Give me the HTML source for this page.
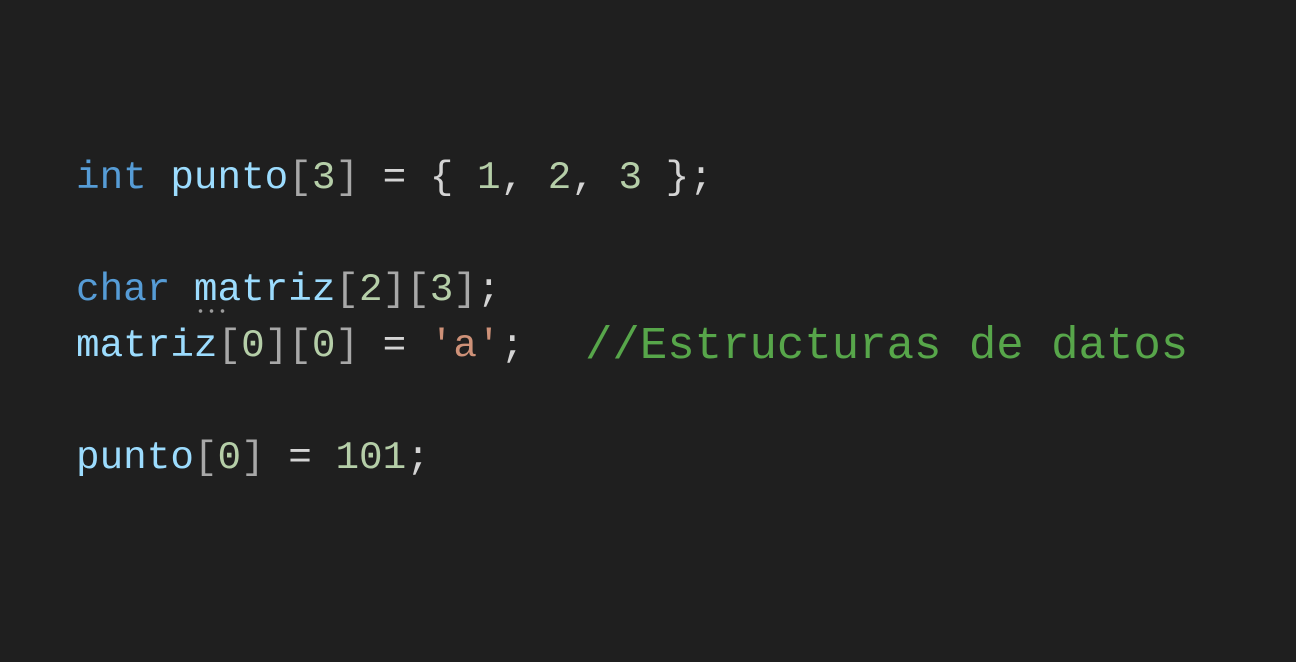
<!DOCTYPE html>
<html><head><meta charset="utf-8"><style>
html,body{margin:0;padding:0;background:#1f1f1f;width:1296px;height:662px;overflow:hidden}
.l{position:absolute;left:76px;font-family:"Liberation Mono",monospace;font-size:39.3px;line-height:56px;white-space:pre;color:#d4d4d4}
.k{color:#569cd6}.v{color:#9cdcfe}.n{color:#b5cea8}.b{color:#a8a8a8}.s{color:#ce9178}
.c{color:#57a64a;font-size:45.7px;line-height:0;position:absolute;left:509px}
.dots{position:absolute;left:195px;top:309px;width:34px;height:4px;background:radial-gradient(circle,#9a9a9a 1.6px,transparent 2px) 0 0/11px 4px repeat-x}
</style></head><body>
<div class="l" style="top:150px"><span class="k">int</span> <span class="v">punto</span><span class="b">[</span><span class="n">3</span><span class="b">]</span> = { <span class="n">1</span>, <span class="n">2</span>, <span class="n">3</span> };</div>
<div class="l" style="top:262px"><span class="k">char</span> <span class="v">matriz</span><span class="b">[</span><span class="n">2</span><span class="b">][</span><span class="n">3</span><span class="b">]</span>;</div>
<div class="dots"></div>
<div class="l" style="top:318px;width:1200px"><span class="v">matriz</span><span class="b">[</span><span class="n">0</span><span class="b">][</span><span class="n">0</span><span class="b">]</span> = <span class="s">'a'</span>;<span class="c" style="top:28px">//Estructuras de datos</span></div>
<div class="l" style="top:430px"><span class="v">punto</span><span class="b">[</span><span class="n">0</span><span class="b">]</span> = <span class="n">101</span>;</div>
</body></html>
